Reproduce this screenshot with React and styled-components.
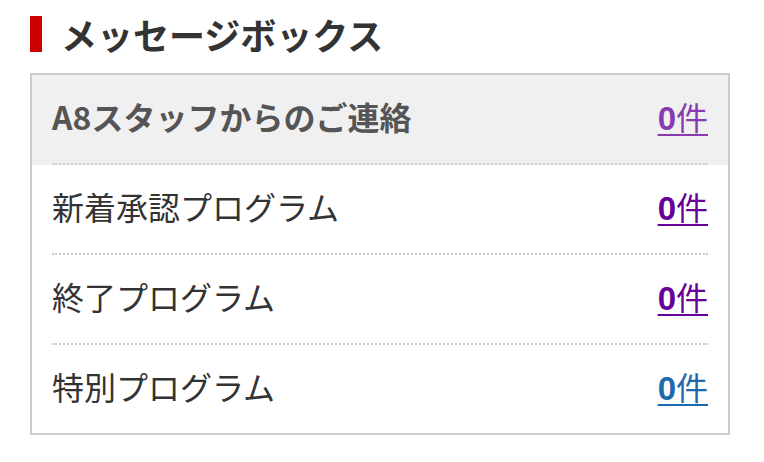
import React from 'react';
import styled, { createGlobalStyle } from "styled-components";

const GlobalStyle = createGlobalStyle`
    body {
        margin:0;
        background:#fff;
        font-family:"Noto Sans CJK JP","Noto Sans",sans-serif;
        color:#333;
    }
`
const Page = styled.div`
    padding:12px 34px 0 30px;
`
const Heading = styled.h2`
    display:flex;
    align-items:center;
    margin:0 0 17px 0;
    height:44px;
    font-size:36px;
    font-weight:bold;
    color:#333;
    line-height:1;
`
const Bar = styled.span`
    width:12px;
    height:36px;
    background:#cc0000;
    margin-right:19px;
`
const Box = styled.ul`
    list-style:none;
    margin:0;
    padding:0;
    width:696px;
    border:2px solid #ccc;
`
const Row = styled.li`
    padding:0 20px;
    background:${p => p.$head ? '#f0f0f0' : '#fff'};
`
const Inner = styled.div`
    box-sizing:border-box;
    display:flex;
    justify-content:space-between;
    align-items:center;
    height:${p => p.$last ? '88px' : '90px'};
    padding-bottom:6px;
    border-bottom:${p => p.$last ? 'none' : '2px dotted #ccc'};
`
const Label = styled.span`
    font-size:32px;
    font-weight:${p => p.$head ? 'bold' : 'normal'};
    color:${p => p.$head ? '#555' : '#333'};
`
const Count = styled.a`
    font-size:32px;
    color:${p => p.$color};
    text-decoration:underline;
    text-underline-offset:4px;
    text-decoration-thickness:2px;
    & b { font-family:"Liberation Sans",sans-serif; font-weight:bold; font-size:33px; }
`

const rows = [
    { label: 'A8スタッフからのご連絡', color: '#8a3ab0', head: true },
    { label: '新着承認プログラム', color: '#660099' },
    { label: '終了プログラム', color: '#660099' },
    { label: '特別プログラム', color: '#1e69ad' },
];

function App() {
    return <>
      <GlobalStyle />
      <Page>
        <Heading><Bar />メッセージボックス</Heading>
        <Box>
          {rows.map((r, i) => (
            <Row key={i} $head={r.head}>
              <Inner $last={i === rows.length - 1}>
                <Label $head={r.head}>{r.label}</Label>
                <Count href="#" $color={r.color}><b>0</b>件</Count>
              </Inner>
            </Row>
          ))}
        </Box>
      </Page>
    </>;
}

export default App;
